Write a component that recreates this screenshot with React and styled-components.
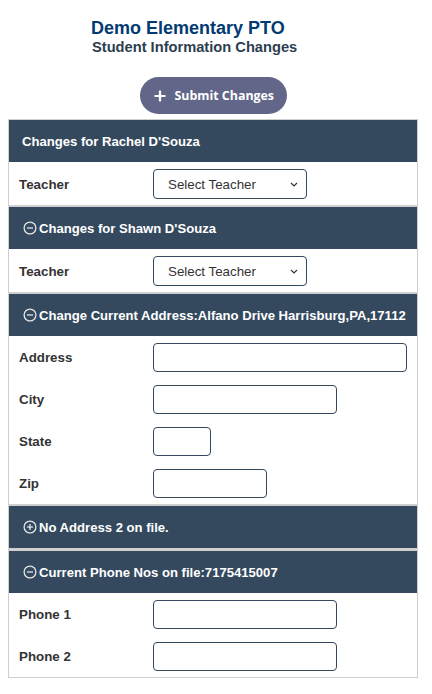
import React from "react";
import styled, { createGlobalStyle } from "styled-components";

const GlobalStyle = createGlobalStyle`
  body {
    margin: 8px;
    background: #fff;
    font-family: "Liberation Sans", Arial, sans-serif;
    color: #333;
  }
`;

const chevron =
  "data:image/svg+xml;utf8," +
  encodeURIComponent(
    '<svg xmlns="http://www.w3.org/2000/svg" width="8" height="5" viewBox="0 0 8 5"><path d="M1 1l3 3 3-3" fill="none" stroke="#333" stroke-width="1.2"/></svg>'
  );

const Page = styled.div`
  width: 410px;
`;

const TitleBlock = styled.div`
  padding: 10px 0 0 83px;
`;

const Title = styled.h1`
  margin: 0;
  font-size: 18px;
  line-height: 21px;
  font-weight: bold;
  color: #023a72;
`;

const Subtitle = styled.h2`
  margin: 0 0 0 1px;
  font-size: 14.67px;
  line-height: 17px;
  font-weight: bold;
  color: #2c3e50;
`;

const ButtonBar = styled.div`
  display: flex;
  justify-content: center;
  margin: 21px 0 5px;
`;

const SubmitButton = styled.button`
  display: flex;
  align-items: center;
  gap: 9px;
  height: 37px;
  width: 147px;
  padding: 0 0 0 14px;
  border: none;
  border-radius: 19px;
  background: #626789;
  color: #fff;
  font-family: "Open Sans", sans-serif;
  font-size: 12.4px;
  font-weight: 700;
  cursor: pointer;
`;

const Section = styled.section`
  border: 1px solid #cfcfcf;
  border-bottom-width: ${(p) => (p.$collapsed ? "2px" : "1px")};
`;

const SectionHeader = styled.div`
  display: flex;
  align-items: center;
  gap: 2px;
  height: 42px;
  padding-left: 13px;
  background: #34495e;
  color: #fff;
  font-size: 13.1px;
  font-weight: bold;
`;

const Row = styled.div`
  display: grid;
  grid-template-columns: 144px 1fr;
  align-items: center;
  padding: 7px 0 6px;
`;

const Label = styled.label`
  padding-left: 10px;
  font-size: 13.33px;
  font-weight: bold;
  color: #333;
`;

const Select = styled.select`
  appearance: none;
  box-sizing: border-box;
  width: 154px;
  height: 30px;
  padding: 0 0 0 14px;
  border: 1px solid #34495e;
  border-radius: 4px;
  background: #fff url("${chevron}") no-repeat right 8px center;
  font-family: "Liberation Sans", Arial, sans-serif;
  font-size: 13.33px;
  color: #333;
`;

const Input = styled.input`
  box-sizing: border-box;
  width: ${(p) => p.$w}px;
  height: 29px;
  border: 1px solid #34495e;
  border-radius: 4px;
  background: #fff;
  font-family: "Liberation Sans", Arial, sans-serif;
  font-size: 13.33px;
`;

const CircleIcon = ({ plus }) => (
  <svg width="14" height="14" viewBox="0 0 14 14" style={{ marginLeft: 1 }}>
    <circle cx="7" cy="7" r="5.9" fill="none" stroke="#e4e7ea" strokeWidth="1.3" />
    <path d="M3.9 7h6.2" stroke="#e4e7ea" strokeWidth="1.3" />
    {plus && <path d="M7 3.9v6.2" stroke="#e4e7ea" strokeWidth="1.3" />}
  </svg>
);

const PlusIcon = () => (
  <svg width="12" height="12" viewBox="0 0 12 12">
    <path d="M6 0.5v11M0.5 6h11" stroke="#fff" strokeWidth="2.2" />
  </svg>
);

const TeacherRow = () => (
  <Row>
    <Label>Teacher</Label>
    <div>
      <Select defaultValue="">
        <option value="">Select Teacher</option>
      </Select>
    </div>
  </Row>
);

const Field = ({ label, width }) => (
  <Row>
    <Label>{label}</Label>
    <div>
      <Input type="text" $w={width} />
    </div>
  </Row>
);

export default function App() {
  return (
    <Page>
      <GlobalStyle />
      <TitleBlock>
        <Title>Demo Elementary PTO</Title>
        <Subtitle>Student Information Changes</Subtitle>
      </TitleBlock>

      <ButtonBar>
        <SubmitButton>
          <PlusIcon />
          Submit Changes
        </SubmitButton>
      </ButtonBar>

      <Section>
        <SectionHeader>Changes for Rachel D'Souza</SectionHeader>
        <TeacherRow />
      </Section>

      <Section>
        <SectionHeader>
          <CircleIcon />
          Changes for Shawn D'Souza
        </SectionHeader>
        <TeacherRow />
      </Section>

      <Section>
        <SectionHeader>
          <CircleIcon />
          Change Current Address:Alfano Drive Harrisburg,PA,17112
        </SectionHeader>
        <Field label="Address" width={254} />
        <Field label="City" width={184} />
        <Field label=" State" width={58} />
        <Field label="Zip" width={114} />
      </Section>

      <Section $collapsed>
        <SectionHeader>
          <CircleIcon plus />
          No Address 2 on file.
        </SectionHeader>
      </Section>

      <Section>
        <SectionHeader>
          <CircleIcon />
          Current Phone Nos on file:7175415007
        </SectionHeader>
        <Field label="Phone 1" width={184} />
        <Field label="Phone 2" width={184} />
      </Section>
    </Page>
  );
}
